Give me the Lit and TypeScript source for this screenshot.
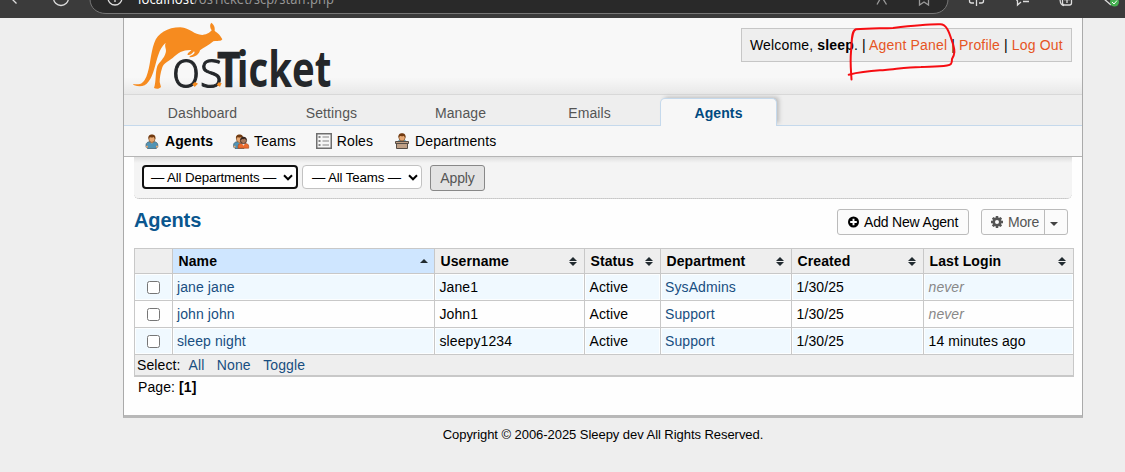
import { LitElement, html, svg, css } from "lit";
import { customElement } from "lit/decorators.js";

const person = (x: number, shirt: string, hair: string, skin: string) => svg`
  <g transform="translate(${x} 0)">
    <path d="M.6 13.2V11c0-2 1.6-3.3 4-3.3h3.8c2.4 0 4 1.300 4 3.300v2.200H11v1.300H2v-1.300z" fill=${shirt} stroke="#385868" stroke-width=".7"/>
    <path d="M.6 11.800h1.900v1.700H.6zM10.600 11.800h1.900v1.700h-1.900z" fill=${skin}/>
    <path d="M4.700 7.500h3.700l-1.900 2.200z" fill=${skin}/>
    <ellipse cx="6.500" cy="5" rx="3.100" ry="3.400" fill=${skin} stroke="#70451f" stroke-width=".6"/>
    <path d="M3 4.900C2.600 1.800 4.300.6 6.500.6s4 1.200 3.500 4.300C9 4.500 9 3.200 8.300 2.900 7 3.800 4.800 3.300 4 3.300c-.2.7-.5 1.200-1 1.600z" fill=${hair}/>
  </g>`;

const icons = {
  agents: html`<svg width="14" height="15" viewBox="0 0 14 15">${person(0.4, "#5294b5", "#713a10", "#e7a873")}</svg>`,
  teams: html`<svg width="17" height="15" viewBox="0 0 17 15">
    ${person(0, "#5294b5", "#713a10", "#e7a873")}
    <path d="M5 14.200v-2c0-1.900 1.500-2.800 3.500-2.800h3.700c2 0 3.500 1 3.500 2.800v2z" fill="#ed6b2d" stroke="#a54518" stroke-width=".6"/>
    <path d="M8.800 9.300h3.400l-1.700 2.500z" fill="#eee"/>
    <circle cx="10.500" cy="6.500" r="3.100" fill="#a8775a" stroke="#301d15" stroke-width=".7"/>
    <path d="M7.300 6.300c0-2.200 1.300-3.500 3.200-3.500s3.200 1.300 3.200 3.500c-1-.4-1.300-1.200-1.700-1.700-1 .7-2 .6-3 .5-.4.500-.8 1-1.700 1.200z" fill="#35251e"/></svg>`,
  roles: html`<svg width="16" height="16" viewBox="0 0 16 16">
    <path d="M.75.750h14.500v14.500H.75z" fill="#f6f6f6" stroke="#6e6e6e" stroke-width="1.500"/>
    <path d="M2.500 3h2v2h-2zM2.500 7h2v2h-2zM2.500 11h2v2h-2z" fill="#888"/>
    <path d="M6.500 4H13M6.500 8H13M6.500 12H13" stroke="#aaa" stroke-width="1.300"/></svg>`,
  departments: html`<svg width="14" height="16" viewBox="0 0 14 16">
    <path d="M2.500 9c0-1.300 1-2 2.300-2h4.400c1.300 0 2.300.7 2.300 2z" fill="#5294b5"/>
    <ellipse cx="7" cy="4.700" rx="3.100" ry="3.200" fill="#e7a873" stroke="#70451f" stroke-width=".6"/>
    <path d="M3.400 4.700C3 1.600 4.800.3 7 .3s4 1.300 3.600 4.400c-1-.4-1-1.700-1.700-2-1.300.9-3.300.4-4.200.4-.3.700-.7 1.200-1.300 1.600z" fill="#713a10"/>
    <path d="M.5 8.500h13v2H.5zM1.500 10.500h11v5h-11z" fill="#bfa086" stroke="#554c45"/></svg>`,
};

const chevron = html`<svg width="10" height="7" viewBox="0 0 10 7"><path d="M1 1.300l4 4 4-4" fill="none" stroke="#000" stroke-width="2"/></svg>`;
const sortBoth = html`<svg width="8" height="9" viewBox="0 0 8 9"><path d="M4 0l4 4H0zM0 5h8L4 9z" fill="#222b30"/></svg>`;
const sortUp = html`<svg width="8" height="9" viewBox="0 0 8 9"><path d="M4 2l4 4H0z" fill="#222b30"/></svg>`;

const gearTeeth = [0, 45, 90, 135, 180, 225, 270, 315];

const agents = [
  { name: "jane jane", user: "Jane1", dept: "SysAdmins", login: "" },
  { name: "john john", user: "John1", dept: "Support", login: "" },
  { name: "sleep night", user: "sleepy1234", dept: "Support", login: "14 minutes ago" },
];

@customElement("app-root")
export class AppRoot extends LitElement {
  static styles = css`
    :host { display: block; position: relative; height: 472px; overflow: hidden; background: #eee; color: #000;
      font: 14px/20px "Liberation Sans", Arial, sans-serif; letter-spacing: .1px; }
    * { box-sizing: border-box; }
    svg { display: block; flex: none; }
    .chrome { height: 18px; }
    .page { width: 960px; height: 400px; margin-left: 123px; background: #fefefe; border: solid #aaa; border-width: 0 1px 3px; border-bottom-color: #b8b8b8; }
    .head { height: 77px; display: flex; justify-content: space-between; background: linear-gradient(#f8f8f8 78%, #e8e8e8); border-bottom: 1px solid #d8d8d8; }
    .welcome { margin: 10px 10px 0 0; width: 331px; height: 34px; border: 1px solid #c6c6c6; background: #eee; padding-left: 8px; line-height: 33px; white-space: nowrap; letter-spacing: .16px; }
    .welcome a { color: #e65524; }
    .tabs { height: 31px; display: flex; gap: 12px; align-items: flex-end; padding-left: 20px; background: #eee; border-bottom: 1px solid #c5d9ec; }
    .tab { width: 117px; height: 27px; text-align: center; line-height: 30px; color: #555; }
    .tab.on { height: 28px; margin-bottom: -1px; line-height: 28px; border: 1px solid #c5d9ec; border-bottom: 0; border-radius: 5px 5px 0 0; background: #f7f7f7; color: #004a80; font-weight: bold; box-shadow: 3px -2px 4px -1px #bbb; clip-path: inset(-8px -10px 0 -5px); }
    .sub { height: 31px; display: flex; background: #f7f7f7; border-bottom: 1px solid #b5b5b5; padding-left: 21px; }
    .item { display: flex; align-items: center; gap: 6px; }
    .item b, .item span { line-height: 30px; }
    .filter { margin: 0 10px; height: 42px; display: flex; align-items: flex-start; padding: 8px; background: linear-gradient(#dedede, #f4f4f4 6px); border-bottom: 1px dotted #bbb; border-radius: 0 0 5px 5px; font-size: 13.333px; letter-spacing: -.15px; }
    .select { height: 24px; border: 1px solid #c2c2c2; border-radius: 4px; background: #fff; display: flex; align-items: center; justify-content: space-between; white-space: nowrap; }
    .select span { padding-top: 2px; }
    .dept { width: 156px; border: 2px solid #101010; padding: 0 3px 0 7px; margin-right: 4px; }
    .team { width: 120px; padding: 0 3px 0 9px; margin-right: 8px; }
    .apply { width: 55px; height: 26px; border: 1px solid #888; border-radius: 3px; background: #e3e3e3; color: #555; text-align: center; line-height: 24px; font-size: 14px; }
    .title { height: 49px; display: flex; align-items: flex-start; padding: 10px 14px 0 10px; }
    h2 { margin: 0; flex: 1; font-size: 20px; line-height: 23px; color: #0a568e; letter-spacing: -.1px; }
    .btn { height: 26px; display: flex; align-items: center; border: 1px solid #bbb; border-radius: 3px; background: #fbfbfb; white-space: nowrap; font-size: 14px; letter-spacing: -.18px; }
    .add { width: 132px; padding-left: 10px; gap: 5px; margin-right: 12px; }
    .more { width: 87px; padding-left: 9px; gap: 5px; color: #555; }
    .split { width: 23px; align-self: stretch; margin-left: auto; border-left: 1px solid #bbb; display: grid; place-items: center; padding: 3px 4px 0 0; }
    .table { margin-left: 10px; width: 940px; border: 1px solid #c8c8c8; border-bottom-width: 2px; }
    .row { display: grid; grid-template-columns: 37px 262px 150px 76px 131px 132px 150px; grid-template-rows: 26px; height: 27px; border-bottom: 1px solid #c8c8c8; }
    .cell { border-left: 1px solid #c8c8c8; padding-left: 4.500px; line-height: 27px; }
    .cell.link { padding-left: 4px; }
    .cell:first-child { border-left: 0; padding: 0; display: grid; place-items: center; }
    .row.odd .cell { background: #f0f9ff; box-shadow: inset 0 0 0 1px #fcfeff; }
    .row.top { height: 25px; grid-template-rows: 24px; background: #eee; font-weight: bold; }
    .top .cell { display: flex; align-items: center; justify-content: space-between; padding: 0 7px 0 5.500px; line-height: 25px; }
    .top .sorted { background: #cfe6ff; padding-right: 6px; }
    .link { color: #184e81; }
    .never { color: #888; font-style: italic; }
    .box { width: 13px; height: 13px; border: 1px solid #767676; border-radius: 2.500px; background: #fff; margin: 1px 1px 0 0; }
    .foot { height: 20px; background: #eee; display: flex; padding-left: 2px; line-height: 21px; }
    .foot span { margin-right: 8px; }
    .foot a { margin-right: 12.500px; }
    .pager { padding-left: 14px; line-height: 21px; }
    .copy { text-align: center; width: 960px; margin-left: 123px; font-size: 13px; line-height: 33px; letter-spacing: -.05px; }
    .mark { position: absolute; left: 0; top: 0; }
  `;

  render() {
    return html`
      <svg class="chrome" width="1125" height="18" viewBox="0 0 1125 18">
        <path d="M0 0h1125v18H0z" fill="#3b3b3b"/>
        <path d="M90 -1C90 8 97 13.500 106 13.500H933c9 0 15-6 15-14.500" fill="#292929" stroke="#777"/>
        <g fill="none" stroke="#ddd" stroke-width="1.300">
          <path d="M10 -3l6.500 6.500"/><circle cx="61" cy="-2" r="7.500"/><circle cx="115" cy="-2" r="7"/><path d="M115 -2v4"/>
          <path d="M974 3h-2.500q-2 0-2-2v-3M976.500-2v8M979 3h2.500q2 0 2-2v-3"/>
          <path d="M1016-1l1.500 2v4l3.500-3M1023 1.500h6"/><path d="M1060-2c0 5 1 7.500 4 7.500M1062.500-2v5q0 2 2 2h5q2 0 2-2v-5M1067-2v5M1064-.3h6"/>
          <path d="M1104-1l7 6"/>
          <path d="M877 4.500l4.500-8 5 8M919.500-2v7l4.500-3 4.500 3v-7" stroke="#999"/>
        </g>
        <circle cx="1114.500" cy="2" r="4.500" fill="#45b050"/><path d="M1112 2l2 2 3-3.500" stroke="#fff" fill="none"/>
        <text x="138" y="4" font-size="14.500" font-family="Open Sans, sans-serif" fill="#fff" textLength="56" lengthAdjust="spacingAndGlyphs">localhost</text>
        <text x="194" y="4" font-size="14.500" font-family="Open Sans, sans-serif" fill="#999" textLength="140" lengthAdjust="spacingAndGlyphs">/osTicket/scp/staff.php</text>
      </svg>
      <div class="page">
        <div class="head">
          <svg width="226" height="76" viewBox="12 12 678 228">
            <path fill="#f68b1f" d="M39 210C62 214 70 207 79 188C91 158 91 118 103 86C113 58 142 40 181 40C211 42 222 63 247 63C264 61 271 54 275 49C269 40 269 31 274 26C284 34 285 42 284 51C295 57 301 65 307 76C301 84 290 79 280 82C266 95 251 101 240 109C238 119 228 129 211 130C205 129 210 125 218 122C224 119 225 115 222 112C216 119 211 124 203 123C201 117 210 114 214 108C190 107 174 116 158 132C143 143 132 147 127 160C121 178 119 194 119 204L123 219C117 226 108 225 102 222C109 203 105 177 112 156C118 143 132 135 137 116C141 105 132 99 137 86C116 105 112 134 103 164C94 196 81 217 59 217C48 216 40 214 39 210Z"/>
            <g fill="#24272a" font-family="Open Sans, sans-serif" letter-spacing="0">
              <text x="155" y="220" font-size="154" font-weight="300" stroke="#24272a" stroke-width="3" textLength="153" lengthAdjust="spacingAndGlyphs">os</text>
              <text x="291" y="220" font-size="144" font-weight="700" stroke="#24272a" stroke-width="2" textLength="71" lengthAdjust="spacingAndGlyphs">T</text>
              <text x="350" y="220" font-size="152" font-weight="700" textLength="284" lengthAdjust="spacingAndGlyphs">icket</text>
            </g>
            <path d="M217 211l8-7 9 5-10 10zM290 213l6-8 9 3-5 10z" fill="#f68b1f"/>
          </svg>
          <div class="welcome">Welcome, <b>sleep</b>. | <a>Agent Panel</a> | <a>Profile</a> | <a>Log Out</a></div>
        </div>
        <div class="tabs">
          ${["Dashboard", "Settings", "Manage", "Emails"].map((t) => html`<div class="tab">${t}</div>`)}
          <div class="tab on">Agents</div>
        </div>
        <div class="sub">
          <div class="item">${icons.agents}<b>Agents</b></div>
          <div class="item" style="margin-left:20px;gap:4px">${icons.teams}<span>Teams</span></div>
          <div class="item" style="margin-left:20px;gap:5px">${icons.roles}<span>Roles</span></div>
          <div class="item" style="margin-left:22px">${icons.departments}<span>Departments</span></div>
        </div>
        <div class="filter">
          <div class="select dept"><span>— All Departments —</span>${chevron}</div>
          <div class="select team"><span>— All Teams —</span>${chevron}</div>
          <div class="apply">Apply</div>
        </div>
        <div class="title">
          <h2>Agents</h2>
          <div class="btn add">
            <svg width="11" height="12" viewBox="0 0 11 12"><circle cx="5.500" cy="6" r="5.500"/><path d="M5.500 2.700v6.600M2.200 6h6.600" stroke="#fff" stroke-width="1.900"/></svg>
            <span>Add New Agent</span>
          </div>
          <div class="btn more">
            <svg width="12" height="12" viewBox="-6 -6 12 12"><g fill="#555">${gearTeeth.map((a) => svg`<path d="M-1.200-6h2.400l.4 3h-3.200z" transform="rotate(${a})"/>`)}</g><circle r="3.200" fill="none" stroke="#555" stroke-width="2.400"/></svg>
            <span>More</span>
            <div class="split"><svg width="8" height="4" viewBox="0 0 8 4"><path d="M0 0h8L4 4z" fill="#444"/></svg></div>
          </div>
        </div>
        <div class="table">
          <div class="row top">
            <div class="cell"></div>
            <div class="cell sorted">Name${sortUp}</div>
            ${["Username", "Status", "Department", "Created", "Last Login"].map((h) => html`<div class="cell">${h}${sortBoth}</div>`)}
          </div>
          ${agents.map((a, i) => html`<div class="row ${i % 2 ? "" : "odd"}">
            <div class="cell"><div class="box"></div></div>
            <div class="cell link">${a.name}</div>
            <div class="cell">${a.user}</div>
            <div class="cell">Active</div>
            <div class="cell link">${a.dept}</div>
            <div class="cell">1/30/25</div>
            <div class="cell">${a.login || html`<span class="never">never</span>`}</div>
          </div>`)}
          <div class="foot"><span>Select:</span><a class="link">All</a><a class="link">None</a><a class="link">Toggle</a></div>
        </div>
        <div class="pager">Page: <b>[1]</b></div>
      </div>
      <div class="copy">Copyright © 2006-2025 Sleepy dev All Rights Reserved.</div>
      <svg class="mark" width="1125" height="100" viewBox="0 0 1125 100">
        <path d="M851.500 79.500C851 70 850 62 851 52C852 42 851 31 856 29.300C868 28 880 28.500 893 28C910 26 927 24 940 24.300C948 24 950 36 953 44C955 51 955 54 952 59C952 64 951 65 947 65.500C938 67 929 66.500 921 67C907 67 897 69 885 70C870 71 864 71 848.700 74.700" fill="none" stroke="#f60d12" stroke-width="2" stroke-linecap="round"/>
      </svg>
    `;
  }
}
